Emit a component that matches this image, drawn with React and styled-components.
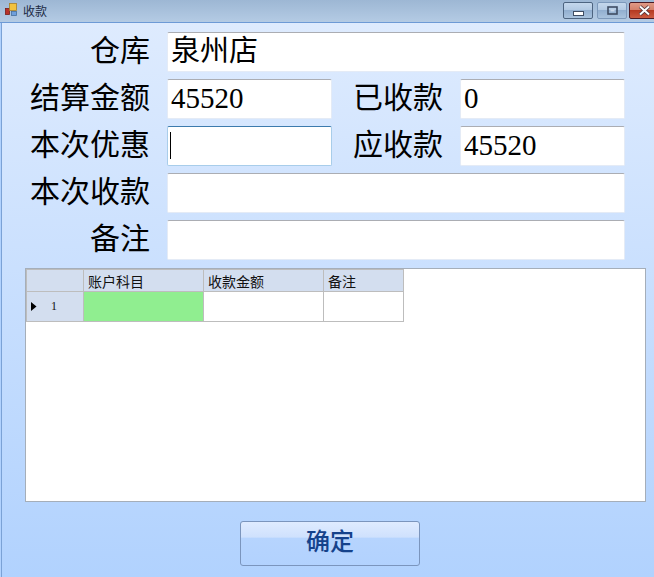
import React from 'react';
import styled, { createGlobalStyle } from 'styled-components';

const GlobalStyle = createGlobalStyle`
  html, body {
    margin: 0;
    padding: 0;
    background: #b1d2fe;
  }
`;

const labelFont = `"Liberation Serif", "Noto Sans CJK SC", serif`;

const Window = styled.div`
  width: 654px;
  height: 577px;
  display: flex;
  flex-direction: column;
  overflow: hidden;
  font-family: ${labelFont};
`;

const TitleBar = styled.div`
  height: 23px;
  flex: none;
  display: flex;
  align-items: center;
  padding: 0 0 2px 5px;
  box-sizing: border-box;
  background: linear-gradient(180deg, #9db7d4 0%, #b4cbe4 100%);
  border-bottom: 1px solid #6d9ad6;
`;

const TitleText = styled.span`
  margin-left: 5px;
  font-family: "Noto Sans CJK SC", sans-serif;
  font-size: 12px;
  color: #1c2a44;
`;

const WindowButtons = styled.div`
  margin-left: auto;
  display: flex;
  align-items: flex-start;
  align-self: flex-start;
  padding-top: 2px;
  margin-right: -6px;
`;

const WinButton = styled.div`
  width: ${p => (p.$close ? 31 : 30)}px;
  height: 17px;
  margin-right: ${p => p.$gap}px;
  box-sizing: border-box;
  display: flex;
  align-items: ${p => (p.$low ? 'flex-end' : 'center')};
  justify-content: center;
  padding-bottom: ${p => (p.$low ? 2 : 0)}px;
  border-radius: 2px;
  border: 1px solid ${p => (p.$close ? '#4c1a24' : p.$active ? '#4d6480' : '#7d99bb')};
  background: ${p =>
    p.$close
      ? 'linear-gradient(180deg, #e09a86 0%, #d4806a 45%, #b53a22 50%, #cc5b41 100%)'
      : 'linear-gradient(180deg, #c4d7ec 0%, #b3cae3 45%, #92afd0 50%, #a9c3de 100%)'};
`;

const Client = styled.div`
  flex: 1;
  margin-left: 1px;
  border-left: 1px solid #7ba2d6;
  background: linear-gradient(180deg, #deebfe 0%, #b1d2fe 100%);
  display: flex;
  flex-direction: column;
  padding: 9px 8px 11px 23px;
`;

const Form = styled.div`
  display: grid;
  grid-template-columns: 124px 165px 94px 165px;
  grid-auto-rows: 40px;
  column-gap: 17px;
  row-gap: 7px;
  margin-left: 1px;
`;

const Label = styled.label`
  font-size: 30px;
  font-weight: 400;
  line-height: 38px;
  color: #000;
  text-align: right;
  white-space: nowrap;
`;

const Field = styled.div`
  grid-column: ${p => (p.$wide ? 'span 3' : 'auto')};
  box-sizing: border-box;
  height: 40px;
  background: #fff;
  border: 1px solid ${p => (p.$focused ? '#a8cdea' : '#e4ebf6')};
  border-top-color: ${p => (p.$focused ? '#3d7bad' : '#abadb3')};
  border-radius: 2px;
  padding-left: 3px;
  font-size: 29px;
  font-weight: 400;
  line-height: 36px;
  color: #000;
  white-space: nowrap;
  overflow: hidden;
`;

const Caret = styled.div`
  width: 1px;
  height: 27px;
  margin-top: 5px;
  margin-left: -1px;
  background: #000;
`;

const DataGrid = styled.div`
  height: 232px;
  width: 619px;
  margin-top: 8px;
  background: #fff;
  border: 1px solid #a5aeb9;
  flex: none;
`;

const GridRow = styled.div`
  display: flex;
  height: ${p => p.$height}px;
  width: max-content;
  border-left: 1px solid #bdbdbd;
  border-top: ${p => (p.$first ? '1px solid #bdbdbd' : '0')};
  border-bottom: 1px solid #bdbdbd;
`;

const GridCell = styled.div`
  width: ${p => p.$width}px;
  box-sizing: border-box;
  border-right: 1px solid #bdbdbd;
  background: ${p => p.$bg};
  font-family: "Noto Sans CJK SC", sans-serif;
  font-size: 14px;
  font-weight: 400;
  color: #111;
  padding-left: 4px;
  white-space: nowrap;
  display: flex;
  align-items: center;
`;

const RowHeader = styled(GridCell)`
  padding-left: 4px;
  font-family: "Liberation Serif", serif;
  font-size: 12px;
`;

const RowNumber = styled.span`
  margin-left: 14px;
`;

const Footer = styled.div`
  flex: 1;
  display: flex;
  align-items: flex-start;
  padding-top: 19px;
  padding-left: 215px;
`;

const ConfirmButton = styled.button`
  width: 180px;
  height: 45px;
  padding: 0 0 8px;
  box-sizing: border-box;
  border: 1px solid #7b95bd;
  border-radius: 3px;
  background: linear-gradient(180deg, #dfebff 0%, #cfe1fd 35%, #b6d4fe 38%, #b2d2fe 100%);
  font-family: ${labelFont};
  font-size: 24px;
  font-weight: 500;
  color: #15428b;
`;

const AppIcon = () => (
  <svg width="13" height="14" viewBox="0 0 13 14">
    <rect x="0.5" y="5.5" width="4" height="6" fill="#b8322a" stroke="#7a1f1a" strokeWidth="0.8" />
    <rect x="4.5" y="0.5" width="7" height="7" fill="#f2c23e" stroke="#a8812a" strokeWidth="0.8" />
    <rect x="6.5" y="8.5" width="5" height="4" fill="#6f9fdc" stroke="#46709f" strokeWidth="0.8" />
  </svg>
);

const MinGlyph = () => (
  <svg width="11" height="5" viewBox="0 0 11 5">
    <rect x="0.5" y="0.5" width="10" height="4" fill="#fff" stroke="#3f4d63" />
  </svg>
);

const MaxGlyph = () => (
  <svg width="11" height="9" viewBox="0 0 11 9">
    <rect x="1" y="1" width="9" height="7" fill="none" stroke="#3f4d63" strokeWidth="1.6" />
    <rect x="3.5" y="3.5" width="4" height="2" fill="#c9d8ea" />
  </svg>
);

const CloseGlyph = () => (
  <svg width="13" height="11" viewBox="0 0 13 11">
    <path d="M2 1.5 L11 9.5 M11 1.5 L2 9.5" stroke="#4a3038" strokeWidth="3.6" />
    <path d="M2 1.5 L11 9.5 M11 1.5 L2 9.5" stroke="#fff" strokeWidth="2" />
  </svg>
);

const RowArrow = () => (
  <svg width="6" height="9" viewBox="0 0 6 9">
    <path d="M0 0 L5.5 4.5 L0 9 Z" fill="#000" />
  </svg>
);

const columns = [
  { title: '账户科目', width: 120 },
  { title: '收款金额', width: 120 },
  { title: '备注', width: 80 },
];

const App = () => {
  return (
    <Window>
      <GlobalStyle />
      <TitleBar>
        <AppIcon />
        <TitleText>收款</TitleText>
        <WindowButtons>
          <WinButton $active $low $gap={4}><MinGlyph /></WinButton>
          <WinButton $gap={2}><MaxGlyph /></WinButton>
          <WinButton $close $gap={0}><CloseGlyph /></WinButton>
        </WindowButtons>
      </TitleBar>
      <Client>
        <Form>
          <Label>仓库</Label>
          <Field $wide>泉州店</Field>

          <Label>结算金额</Label>
          <Field>45520</Field>
          <Label>已收款</Label>
          <Field>0</Field>

          <Label>本次优惠</Label>
          <Field $focused><Caret /></Field>
          <Label>应收款</Label>
          <Field>45520</Field>

          <Label>本次收款</Label>
          <Field $wide />

          <Label>备注</Label>
          <Field $wide />
        </Form>

        <DataGrid>
          <GridRow $first $height={21}>
            <GridCell $width={57} $bg="#d3deef" />
            {columns.map(col => (
              <GridCell key={col.title} $width={col.width} $bg="#d3deef">{col.title}</GridCell>
            ))}
          </GridRow>
          <GridRow $height={29}>
            <RowHeader $width={57} $bg="#d3deef">
              <RowArrow />
              <RowNumber>1</RowNumber>
            </RowHeader>
            <GridCell $width={120} $bg="#90ee90" />
            <GridCell $width={120} $bg="#fff" />
            <GridCell $width={80} $bg="#fff" />
          </GridRow>
        </DataGrid>

        <Footer>
          <ConfirmButton>确定</ConfirmButton>
        </Footer>
      </Client>
    </Window>
  );
};

export default App;
